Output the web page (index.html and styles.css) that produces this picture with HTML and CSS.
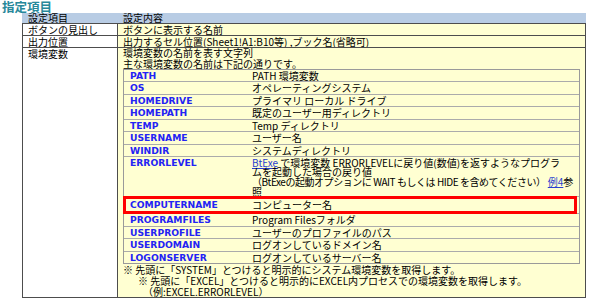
FILE: index.html
```html
<!DOCTYPE html>
<html lang="ja">
<head>
<meta charset="utf-8">
<title>指定項目</title>
<link rel="stylesheet" href="styles.css">
</head>
<body>
<h1 class="title">指定項目</h1>
<div class="spec">
  <div class="hd">設定項目</div>
  <div class="hd">設定内容</div>
  <div class="k">ボタンの見出し</div>
  <div class="v">ボタンに表示する名前</div>
  <div class="k">出力位置</div>
  <div class="v">出力するセル位置(Sheet1!A1:B10等) ,ブック名(省略可)</div>
  <div class="k last">環境変数</div>
  <div class="v last">
    <p class="line">環境変数の名前を表す文字列</p>
    <p class="line">主な環境変数の名前は下記の通りです。</p>
    <div class="vars">
      <div class="row"><span class="name">PATH</span><span class="desc">PATH 環境変数</span></div>
      <div class="row"><span class="name">OS</span><span class="desc">オペレーティングシステム</span></div>
      <div class="row"><span class="name">HOMEDRIVE</span><span class="desc">プライマリ ローカル ドライブ</span></div>
      <div class="row"><span class="name">HOMEPATH</span><span class="desc">既定のユーザー用ディレクトリ</span></div>
      <div class="row"><span class="name">TEMP</span><span class="desc">Temp ディレクトリ</span></div>
      <div class="row"><span class="name">USERNAME</span><span class="desc">ユーザー名</span></div>
      <div class="row"><span class="name">WINDIR</span><span class="desc">システムディレクトリ</span></div>
      <div class="row tall"><span class="name">ERRORLEVEL</span><span class="desc"><a class="link" href="#">BtExe</a> で環境変数 ERRORLEVELに戻り値(数値)を返すようなプログラ<br>ムを起動した場合の戻り値<br><span class="tight">（BtExeの起動オプションに WAIT もしくは HIDE を含めてください）</span> <a class="link" href="#">例4</a>参<br>照</span></div>
      <div class="row hl"><span class="name">COMPUTERNAME</span><span class="desc">コンピューター名</span></div>
      <div class="row"><span class="name">PROGRAMFILES</span><span class="desc">Program Filesフォルダ</span></div>
      <div class="row"><span class="name">USERPROFILE</span><span class="desc">ユーザーのプロファイルのパス</span></div>
      <div class="row"><span class="name">USERDOMAIN</span><span class="desc">ログオンしているドメイン名</span></div>
      <div class="row"><span class="name">LOGONSERVER</span><span class="desc">ログオンしているサーバー名</span></div>
    </div>
    <p class="note">※ 先頭に「SYSTEM」とつけると明示的にシステム環境変数を取得します。</p>
    <p class="note sub">※ 先頭に「EXCEL」とつけると明示的にEXCEL内プロセスでの環境変数を取得します。</p>
    <p class="note sub2">（例:EXCEL.ERRORLEVEL）</p>
  </div>
</div>
</body>
</html>
```

FILE: styles.css
```css
body {
  margin: 0;
  background: #fff;
  color: #000;
  font-family: "Noto Sans CJK JP", sans-serif;
  font-size: 10px;
}

.title {
  margin: 0;
  padding-left: 2px;
  height: 13px;
  line-height: 14px;
  font-size: 12.5px;
  font-weight: bold;
  color: #27889a;
}

.spec {
  margin-left: 22px;
  width: 564px;
  display: grid;
  grid-template-columns: 95px 469px;
}

.hd {
  background: #b8cce4;
  height: 10px;
  line-height: 10px;
  padding-left: 6px;
}

.k,
.v {
  box-sizing: border-box;
  height: 12px;
  line-height: 11px;
  padding-left: 5px;
  border-top: 1px solid #4d4d4d;
  border-left: 1px solid #4d4d4d;
  white-space: nowrap;
}

.k {
  background: #fff;
}

.v {
  background: #ffffd2;
  border-right: 1px solid #4d4d4d;
  padding-right: 5px;
}

.last {
  height: 251px;
  border-bottom: 1px solid #4d4d4d;
}

.line {
  margin: 0;
  line-height: 10.5px;
}

.vars {
  border: 1px solid #9a9a9a;
  margin-top: -0.5px;
}

.row {
  box-sizing: border-box;
  display: grid;
  grid-template-columns: 126px 1fr;
  height: 12.5px;
  line-height: 11.5px;
  border-bottom: 1px solid #ababab;
}

.row:last-child {
  border-bottom: 0;
  height: 11.5px;
}

.row.tall {
  height: 40px;
  line-height: 9.8px;
  padding-top: 0.5px;
}

.row.hl {
  position: relative;
  height: 17px;
  line-height: 16px;
}

.row.hl::after {
  content: "";
  position: absolute;
  left: -1px;
  top: -1px;
  right: 2px;
  bottom: -1px;
  border: 3px solid #ff0000;
}

.name {
  padding-left: 6px;
  font-family: "DejaVu Sans", sans-serif;
  font-weight: bold;
  font-size: 9.2px;
  color: #2323f5;
}

.desc {
  padding-left: 2px;
}

.tight {
  letter-spacing: -0.45px;
}

.link {
  color: #2a3fd0;
  text-decoration: underline;
}

.note {
  margin: 0;
  line-height: 11px;
}

.note.sub {
  padding-left: 15px;
}

.note.sub2 {
  padding-left: 20px;
}
```
